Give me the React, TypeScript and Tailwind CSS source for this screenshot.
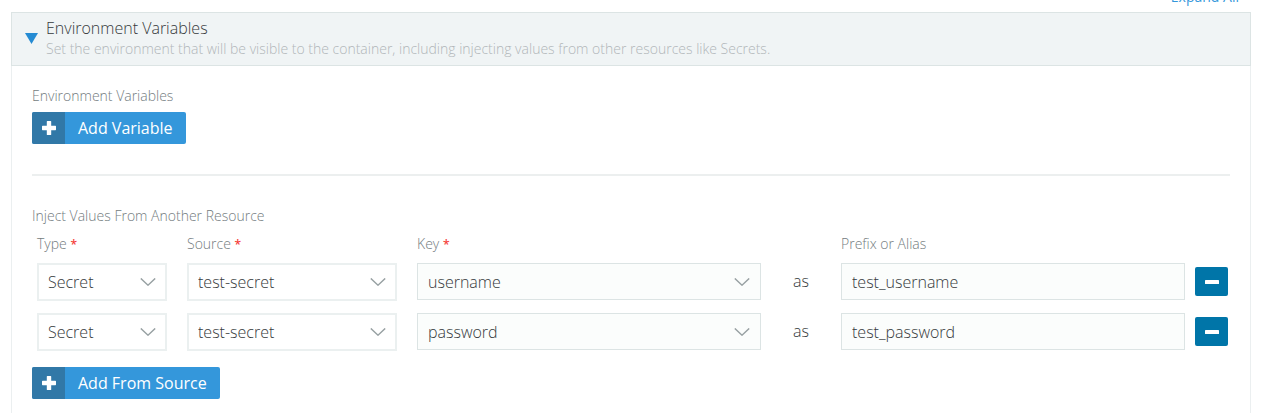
import { useState } from 'react';

type Source = { key: string; alias: string };

const sources: Source[] = [
  { key: 'username', alias: 'test_username' },
  { key: 'password', alias: 'test_password' },
];

const gridColumns =
  'grid grow grid-cols-[130px_210px_minmax(0,1fr)_40px_minmax(0,1fr)] items-start gap-5';

function Chevron() {
  return (
    <svg
      className="pointer-events-none absolute top-[15px] right-[11px] h-2 w-4"
      viewBox="0 0 16 8"
      fill="none"
      stroke="#98a1a3"
      strokeWidth="1.4"
      aria-hidden="true"
    >
      <path d="M0.8 0.4 8 7.2 15.2 0.4" />
    </svg>
  );
}

function Dropdown({ id, label, value, outlined }: { id: string; label: string; value: string; outlined?: boolean }) {
  return (
    <div className="relative">
      <select
        id={id}
        aria-label={label}
        defaultValue={value}
        className={
          outlined
            ? 'block h-[38px] w-full appearance-none border-2 border-[#ebf0f0] bg-white px-[9px] text-base text-[#35393b]'
            : 'block h-[37px] w-full appearance-none border border-[#dce4e4] bg-[#fbfdfc] px-[10px] text-base text-[#35393b]'
        }
      >
        <option>{value}</option>
      </select>
      <Chevron />
    </div>
  );
}

function PlusIcon() {
  return (
    <svg className="size-[14px]" viewBox="0 0 14 14" fill="white" aria-hidden="true">
      <path d="M5.4 0h3.200q.6 0 .6.6V4.800h4.200q.6 0 .6.6v3.200q0 .6-.6.6H9.200v4.200q0 .6-.6.6H5.400q-.6 0-.6-.6V9.200H.6Q0 9.200 0 8.600V5.400Q0 4.800 .6 4.800H4.800V.6Q4.800 0 5.400 0z" />
    </svg>
  );
}

function AddButton({ text }: { text: string }) {
  return (
    <button type="button" className="flex h-8 overflow-hidden rounded-xs bg-[#3497db] text-base font-normal text-white">
      <span className="flex h-full w-[33px] items-center justify-center bg-[#3178a7]">
        <PlusIcon />
      </span>
      <span className="px-[13px] leading-8">{text}</span>
    </button>
  );
}

function ColumnLabel({ htmlFor, text, required }: { htmlFor: string; text: string; required?: boolean }) {
  return (
    <label htmlFor={htmlFor}>
      {text}
      {required && (
        <>
          {' '}
          <span className="text-xs font-semibold text-[#f5413c]">*</span>
        </>
      )}
    </label>
  );
}

export default function App() {
  const [open, setOpen] = useState(true);
  const [rows, setRows] = useState(sources);

  return (
    <main className="min-h-screen overflow-hidden bg-white pr-[17px] pl-[11px] font-['Open_Sans',sans-serif] font-light text-[#35393b]">
      <div className="flex h-3 items-end justify-end overflow-hidden pr-3 pb-[5px]">
        <a href="#all" className="text-sm leading-5 font-normal text-[#3497db]">
          Expand All
        </a>
      </div>
      <section>
        <header className="border border-[#dce4e4] bg-[#f0f4f5]">
          <button
            type="button"
            aria-expanded={open}
            onClick={() => setOpen(!open)}
            className="flex h-[52px] w-full items-center gap-2 px-[13px] pb-[2px] text-left"
          >
            <svg className="h-[11px] w-[13px]" viewBox="0 0 13 11" fill="#258bd3" aria-hidden="true">
              <path d="M0 0h13L6.500 11z" />
            </svg>
            <span className="flex flex-col pb-px">
              <span className="text-base leading-[22px]">Environment Variables</span>
              <span className="text-sm leading-5 text-[#b0b6b9]">
                Set the environment that will be visible to the container, including injecting values from other
                resources like Secrets.
              </span>
            </span>
          </button>
        </header>

        {open && (
          <div className="min-h-[347px] border-x border-[#ebeff0] px-5 pt-5 text-sm text-[#737c80]">
            <h3 className="leading-5">Environment Variables</h3>
            <div className="pt-[6px]">
              <AddButton text="Add Variable" />
            </div>

            <hr className="mt-[30px] border-t-2 border-[#ecefef]" />

            <h3 className="mt-[30px] leading-5">Inject Values From Another Resource</h3>
            <div className="flex gap-[10px] pt-2 pr-[2px] pl-[5px] leading-5">
              <div className={gridColumns}>
                <ColumnLabel htmlFor="type-0" text="Type" required />
                <ColumnLabel htmlFor="source-0" text="Source" required />
                <ColumnLabel htmlFor="key-0" text="Key" required />
                <span />
                <ColumnLabel htmlFor="alias-0" text="Prefix or Alias" />
              </div>
              <div className="w-[33px] shrink-0" />
            </div>

            <div className="flex flex-col gap-3 pt-[9px] pr-[2px] pl-[5px]">
              {rows.map((row, i) => (
                <div key={row.key} className="flex items-start gap-[10px]">
                  <div className={gridColumns}>
                    <Dropdown id={`type-${i}`} label="Type" value="Secret" outlined />
                    <Dropdown id={`source-${i}`} label="Source" value="test-secret" outlined />
                    <Dropdown id={`key-${i}`} label="Key" value={row.key} />
                    <span className="text-center text-base leading-9 text-[#35393b]">as</span>
                    <input
                      id={`alias-${i}`}
                      type="text"
                      aria-label="Prefix or Alias"
                      defaultValue={row.alias}
                      className="h-[37px] w-full border border-[#dce4e4] bg-[#fbfdfc] px-[10px] text-base text-[#35393b]"
                    />
                  </div>
                  <button
                    type="button"
                    aria-label="Remove"
                    onClick={() => setRows(rows.filter((r) => r !== row))}
                    className="mt-1 flex h-[29px] w-[33px] shrink-0 items-center justify-center rounded-xs bg-[#0075a8]"
                  >
                    <svg className="h-1 w-[14px]" viewBox="0 0 14 4" fill="white" aria-hidden="true">
                      <rect width="14" height="4" rx="0.6" />
                    </svg>
                  </button>
                </div>
              ))}
            </div>

            <div className="pt-4">
              <AddButton text="Add From Source" />
            </div>
          </div>
        )}
      </section>
    </main>
  );
}
